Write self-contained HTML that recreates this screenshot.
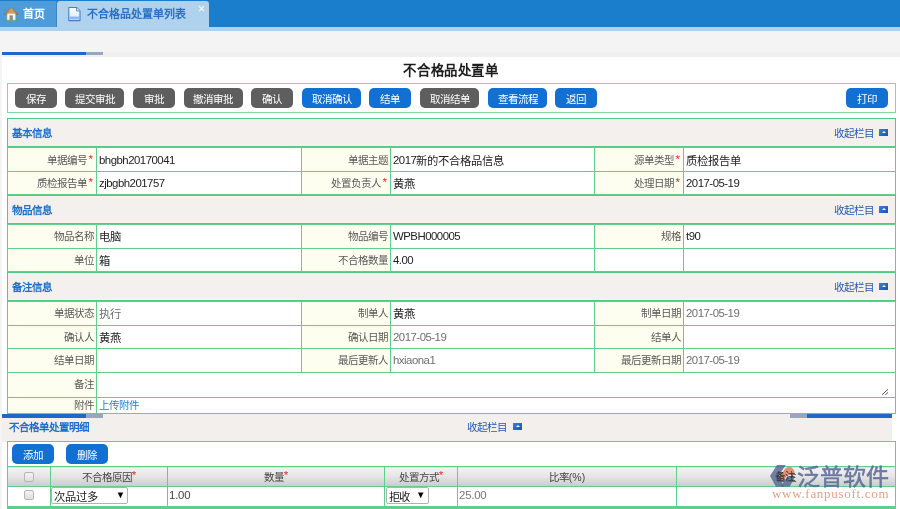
<!DOCTYPE html>
<html lang="zh-CN">
<head>
<meta charset="utf-8">
<title>不合格品处置单</title>
<style>
*{box-sizing:border-box;margin:0;padding:0}
html,body{width:900px;height:509px;overflow:hidden}
body{background:#f4f4f4;font-family:"Liberation Sans",sans-serif;font-size:10.5px;color:#333;position:relative}
.abs{position:absolute}
#root{position:absolute;left:0;top:0;width:900px;height:509px;will-change:transform}
#topbar{left:0;top:0;width:900px;height:27px;background:#1b7ecc}
#strip{left:0;top:27px;width:900px;height:4px;background:#afd3ef}
#tabhome{left:0;top:1px;width:57px;height:26px;background:#4d9bd9;border-right:1px solid #3a86c8;color:#fff;font-weight:bold;font-size:11px;line-height:27px;padding-left:23px}
#tabact{left:57px;top:1px;width:152px;height:30px;background:#afd3ef;border-radius:3px 3px 0 0;color:#2a70c6;font-weight:bold;font-size:11px;line-height:27px;padding-left:30px}
#tabx{left:198px;top:3px;color:#fff;font-size:12px;line-height:13px}
#band{left:0;top:52px;width:900px;height:5px;background:#f3efec}
#prog1{left:2px;top:52px;width:84px;height:3px;background:#1d68c8}
#prog2{left:86px;top:52px;width:17px;height:3px;background:#9aa6bd}
#page{left:2px;top:57px;width:898px;height:452px;background:#fff}
#title{left:1px;top:61px;width:900px;text-align:center;font-weight:bold;font-size:13.4px;color:#1c1c1c;line-height:19px;letter-spacing:.6px}
#toolbar{left:7px;top:83px;width:889px;height:30px;border:1px solid #7ddb9f;background:#fff}
.btn{position:absolute;top:88px;height:20px;border-radius:5px;color:#fff;font-size:10.5px;line-height:22px;text-align:center}
.g{background:#5e5e5e}
.b{background:#1370d3}
.sec{position:absolute;left:7px;width:889px;border:1px solid #4fcb82;background:#f3f0ed;box-shadow:inset 0 1px #fbf0f1,inset 0 -1px #fbf0f1}
.sh{position:absolute;left:12px;font-weight:bold;color:#1b6fd0;font-size:10.5px;line-height:14px}
.col{position:absolute;color:#2457b8;font-size:10.5px;line-height:14px}
.ico{position:absolute;width:9px;height:7px;background:linear-gradient(135deg,#3d7fdc,#1a50b4)}
.ico:after{content:"";position:absolute;left:2.5px;top:2px;width:0;height:0;border-left:2px solid transparent;border-right:2px solid transparent;border-bottom:2.5px solid #fff}
table.f{position:absolute;left:7px;width:888px;border-collapse:collapse;table-layout:fixed;background:#fff}
table.f td{border:1px solid #5fd08a;height:24px;line-height:16px;font-size:10.5px;padding:0 2px 0 2px;white-space:nowrap;overflow:hidden;vertical-align:middle}
table.f tr.s td{height:23px}
table.f tr.t td{height:25px}
table.f tr.a td{height:16px;font-size:10.5px;letter-spacing:0;line-height:12px;padding-bottom:1px !important}
table.u td{padding-bottom:2px !important}
table.u tr.s td{padding-bottom:0 !important}
table.f td.l{background:#fdfdf0;text-align:right;color:#585858;font-size:10.5px;padding-right:2px}
table.f td.v{color:#222;font-size:11.4px;letter-spacing:-.5px}
.r{color:#f22;font-size:11.5px;margin:0 1px 0 2px;line-height:10px;position:relative;top:-1px}
.c{font-size:11.3px;letter-spacing:0;position:relative;top:1px}
table.f td.gray{color:#6e6e6e}
a.up{color:#1e7fd8}

#band2{left:2px;top:414px;width:890px;height:28px;background:#f3efec}
#p3{left:2px;top:414px;width:84px;height:4px;background:#1d68c8}
#p4{left:86px;top:414px;width:17px;height:4px;background:#9aa6bd}
#p5{left:790px;top:414px;width:17px;height:4px;background:#9aa6bd}
#p6{left:807px;top:414px;width:85px;height:4px;background:#1d68c8}
#dbox{left:7px;top:441px;width:889px;height:26px;border:1px solid #5fd08a;background:#fff}
table.d{position:absolute;left:7px;top:466px;width:888px;border-collapse:collapse;table-layout:fixed;background:#fff}
table.d td{border:1px solid #5fd08a;line-height:16px;font-size:10.5px;padding:0 2px;white-space:nowrap;overflow:hidden;vertical-align:middle}
table.d tr.h td{height:20px;text-align:center;background:linear-gradient(#f3f3f3,#e6e6e6 45%,#cbcbcb);color:#444}
table.d tr.r td{height:20px;color:#555;font-size:11.4px;letter-spacing:-.2px;padding-left:1px}
table.d .r{margin:0;top:-1.5px}
.cb{display:block;margin:0 auto;width:10px;height:10px;border:1px solid #b5b5b5;border-radius:2px;background:linear-gradient(#f4f4f4,#dedede);vertical-align:middle}
.sel{display:block;height:17px;border:1px solid #b2b2b2;border-radius:2px;background:#fff;font-size:11.3px;line-height:19px;color:#222;position:relative;padding-left:2px;text-align:left;overflow:hidden}
.sel i{position:absolute;right:2.5px;top:0;font-style:normal;font-size:9.5px;line-height:14px;color:#000}
#botline{left:7px;top:506px;width:889px;height:3px;background:#5fd08a}
#wm1{left:797px;top:463px;font-size:23px;line-height:28px;color:rgba(84,100,146,.8);-webkit-text-stroke:.5px rgba(84,100,146,.8);white-space:nowrap}
#wm2{left:772px;top:486px;font-family:"Liberation Serif",serif;font-size:13px;line-height:16px;color:#e8a088;letter-spacing:.7px;white-space:nowrap}
</style>
</head>
<body>
<div id="root">
<div id="topbar" class="abs"></div>
<div id="strip" class="abs"></div>
<div id="tabhome" class="abs">首页</div>
<div id="tabact" class="abs">不合格品处置单列表</div>
<div id="tabx" class="abs">×</div>
<svg class="abs" style="left:4px;top:7px" width="15" height="15" viewBox="0 0 15 15">
<defs><linearGradient id="rf" x1="0" y1="0" x2="0" y2="1"><stop offset="0" stop-color="#e9b77a"/><stop offset="1" stop-color="#b5702c"/></linearGradient></defs>
<rect x="0.5" y="11.6" width="13.5" height="2" rx="1" fill="#58b02e"/>
<rect x="3" y="6" width="8.5" height="7" fill="#f4f2ee" stroke="#b9b4ab" stroke-width=".6"/>
<rect x="5.6" y="8.4" width="3.2" height="4.6" fill="#8a8a8a"/>
<path d="M7.25 0.8 L14.2 7.2 L12.6 7.6 L7.25 3.2 L1.9 7.6 L0.3 7.2 Z" fill="url(#rf)" stroke="#9a6226" stroke-width=".5"/>
<path d="M7.25 2.2 L12 6.6 L2.5 6.6 Z" fill="#d39a58"/>
</svg>
<svg class="abs" style="left:67px;top:6px" width="15" height="16" viewBox="0 0 15 16">
<defs><linearGradient id="dg" x1="0" y1="0" x2="0" y2="1"><stop offset="0" stop-color="#ffffff"/><stop offset=".6" stop-color="#e6effb"/><stop offset="1" stop-color="#c4dcf8"/></linearGradient></defs>
<path d="M1.8 1.5 H9.5 L13 5 V14.6 H1.8 Z" fill="url(#dg)" stroke="#4a7ac8" stroke-width="1.1" stroke-linejoin="round"/>
<path d="M9.5 1.5 V5 H13" fill="#dbe8fa" stroke="#4a7ac8" stroke-width=".8"/>
<rect x="2.6" y="10.6" width="9.8" height="2.6" fill="#86b9f0"/>
</svg>
<div id="band" class="abs"></div>
<div id="prog1" class="abs"></div>
<div id="prog2" class="abs"></div>
<div id="page" class="abs"></div>
<div id="title" class="abs">不合格品处置单</div>
<div id="toolbar" class="abs"></div>
<div class="btn g" style="left:14.6px;width:42px">保存</div>
<div class="btn g" style="left:65px;width:59px">提交审批</div>
<div class="btn g" style="left:133px;width:42px">审批</div>
<div class="btn g" style="left:183.6px;width:59px">撤消审批</div>
<div class="btn g" style="left:251px;width:42px">确认</div>
<div class="btn b" style="left:302px;width:59px">取消确认</div>
<div class="btn b" style="left:369px;width:42px">结单</div>
<div class="btn g" style="left:420px;width:59px">取消结单</div>
<div class="btn b" style="left:488px;width:59px">查看流程</div>
<div class="btn b" style="left:555px;width:42px">返回</div>
<div class="btn b" style="left:846px;width:42px">打印</div>

<!-- section 1 -->
<div class="sec" style="top:118px;height:29px"></div>
<div class="sh" style="top:126px">基本信息</div>
<div class="col" style="left:834px;top:126px">收起栏目</div><div class="ico" style="left:879px;top:129px"></div>
<table class="f" style="top:147px">
<colgroup><col style="width:89px"><col style="width:205px"><col style="width:89px"><col style="width:204px"><col style="width:89px"><col style="width:212px"></colgroup>
<tr><td class="l">单据编号<span class="r">*</span></td><td class="v">bhgbh20170041</td><td class="l">单据主题</td><td class="v">2017<span class="c">新的不合格品信息</span></td><td class="l">源单类型<span class="r">*</span></td><td class="v"><span class="c">质检报告单</span></td></tr>
<tr class="s"><td class="l">质检报告单<span class="r">*</span></td><td class="v">zjbgbh201757</td><td class="l">处置负责人<span class="r">*</span></td><td class="v"><span class="c">黄燕</span></td><td class="l">处理日期<span class="r">*</span></td><td class="v">2017-05-19</td></tr>
</table>

<!-- section 2 -->
<div class="sec" style="top:195px;height:29px"></div>
<div class="sh" style="top:203px">物品信息</div>
<div class="col" style="left:834px;top:203px">收起栏目</div><div class="ico" style="left:879px;top:206px"></div>
<table class="f u" style="top:224px">
<colgroup><col style="width:89px"><col style="width:205px"><col style="width:89px"><col style="width:204px"><col style="width:89px"><col style="width:212px"></colgroup>
<tr><td class="l">物品名称</td><td class="v"><span class="c">电脑</span></td><td class="l">物品编号</td><td class="v">WPBH000005</td><td class="l">规格</td><td class="v">t90</td></tr>
<tr class="s"><td class="l">单位</td><td class="v"><span class="c">箱</span></td><td class="l">不合格数量</td><td class="v">4.00</td><td></td><td></td></tr>
</table>

<!-- section 3 -->
<div class="sec" style="top:272px;height:29px"></div>
<div class="sh" style="top:280px">备注信息</div>
<div class="col" style="left:834px;top:280px">收起栏目</div><div class="ico" style="left:879px;top:283px"></div>
<table class="f u" style="top:301px">
<colgroup><col style="width:89px"><col style="width:205px"><col style="width:89px"><col style="width:204px"><col style="width:89px"><col style="width:212px"></colgroup>
<tr><td class="l">单据状态</td><td class="v gray"><span class="c">执行</span></td><td class="l">制单人</td><td class="v"><span class="c">黄燕</span></td><td class="l">制单日期</td><td class="v gray">2017-05-19</td></tr>
<tr class="s"><td class="l">确认人</td><td class="v"><span class="c">黄燕</span></td><td class="l">确认日期</td><td class="v gray">2017-05-19</td><td class="l">结单人</td><td class="v"></td></tr>
<tr><td class="l">结单日期</td><td class="v"></td><td class="l">最后更新人</td><td class="v gray">hxiaona1</td><td class="l">最后更新日期</td><td class="v gray">2017-05-19</td></tr>
<tr class="t"><td class="l">备注</td><td class="v" colspan="5"></td></tr>
<tr class="a"><td class="l">附件</td><td class="v" colspan="5"><a class="up">上传附件</a></td></tr>
</table>

<svg class="abs" style="left:880px;top:387px" width="10" height="10" viewBox="0 0 10 10"><path d="M2.1 7.7 L8 2.25 M5.3 7.7 L8 5.4" stroke="#555" stroke-width="1" fill="none"/></svg>
<!-- detail section -->
<div id="band2" class="abs"></div>
<div id="p3" class="abs"></div><div id="p4" class="abs"></div><div id="p5" class="abs"></div><div id="p6" class="abs"></div>
<div class="sh" style="left:9px;top:420px">不合格单处置明细</div>
<div class="col" style="left:467px;top:420px">收起栏目</div><div class="ico" style="left:513px;top:423px"></div>
<div id="dbox" class="abs"></div>
<div class="btn b" style="left:12px;top:444px;width:42px">添加</div>
<div class="btn b" style="left:66px;top:444px;width:42px">删除</div>
<table class="d">
<colgroup><col style="width:43px"><col style="width:117px"><col style="width:217px"><col style="width:73px"><col style="width:219px"><col style="width:219px"></colgroup>
<tr class="h"><td><span class="cb"></span></td><td>不合格原因<span class="r">*</span></td><td>数量<span class="r">*</span></td><td>处置方式<span class="r">*</span></td><td>比率(%)</td><td>备注</td></tr>
<tr class="r"><td style="text-align:center"><span class="cb"></span></td><td style="padding:0"><span class="sel" style="width:77px;margin-left:.4px;margin-top:1px">次品过多<i>▼</i></span></td><td style="color:#444">1.00</td><td style="padding:0"><span class="sel" style="width:43px;margin-left:.6px;margin-top:1px">拒收<i>▼</i></span></td><td style="color:#777">25.00</td><td></td></tr>
</table>
<div id="botline" class="abs"></div>
<svg class="abs" style="left:765px;top:460px" width="35" height="30" viewBox="0 0 35 30">
<path d="M12 5 L20.7 5 L13.6 16 L19.2 26.7 L11 26.7 L5 16 Z" fill="rgba(84,100,146,.8)"/>
<path d="M16.7 21.6 C15.4 14.5 18.8 7.6 24.7 6.6 C28.2 8 30.2 11 29.7 14.2 L22.6 15 Z" fill="#e0896a" opacity=".92"/>
<path d="M22 16.7 L30 16.7 L24.7 26.7 L15.7 26.7 Z" fill="rgba(84,100,146,.8)"/>
</svg>
<div id="wm1" class="abs">泛普软件</div>
<div id="wm2" class="abs">www.fanpusoft.com</div>
<div class="abs" style="left:675.5px;top:467px;width:218px;height:19px;line-height:19px;text-align:center;color:#333;font-size:10.5px">备注</div>
</div>
</body>
</html>
